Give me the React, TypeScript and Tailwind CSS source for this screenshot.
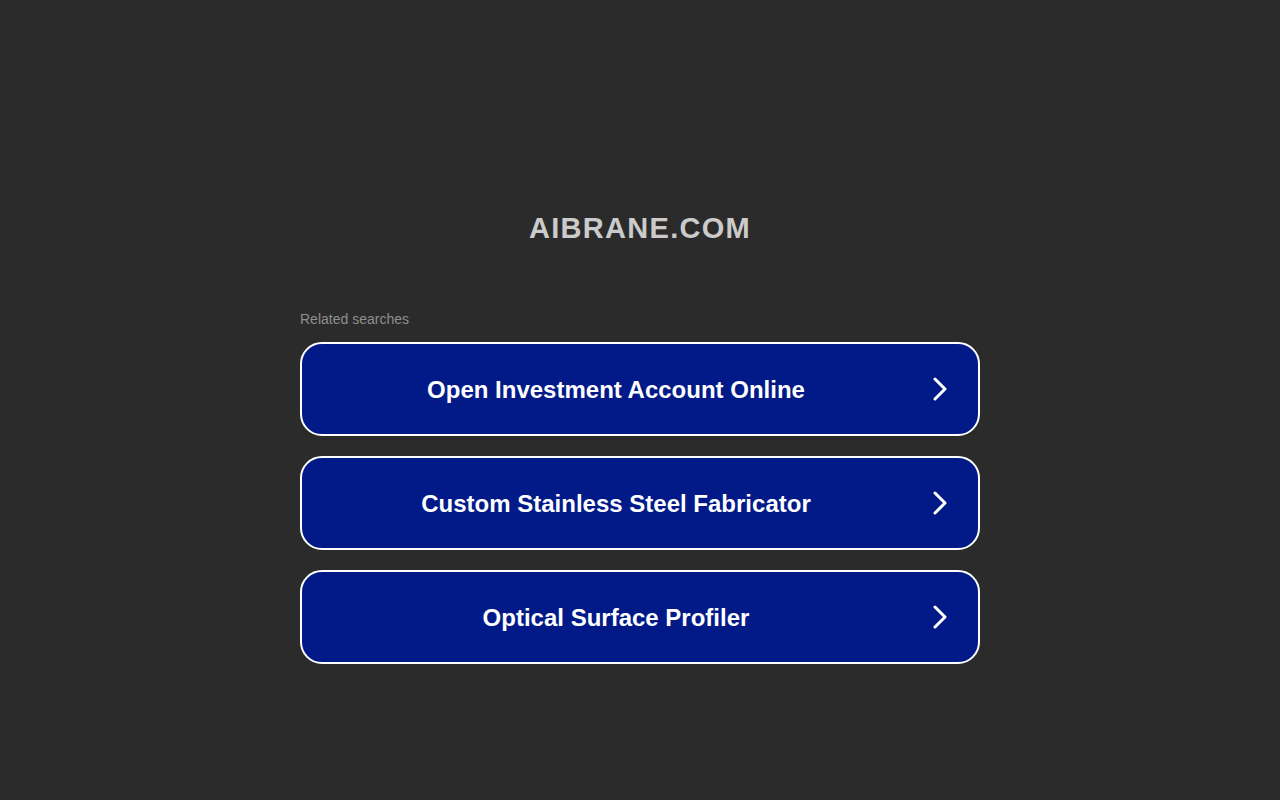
import React from "react";

const items = [
  "Open Investment Account Online",
  "Custom Stainless Steel Fabricator",
  "Optical Surface Profiler",
];

function Chevron() {
  return (
    <svg width="20" height="24" viewBox="0 0 20 24" className="shrink-0">
      <path d="M5 2 L15 12 L5 22" fill="none" stroke="white" strokeWidth="3" strokeLinecap="round" strokeLinejoin="round" />
    </svg>
  );
}

export default function App() {
  return (
    <div className="min-h-[800px] w-full bg-[#2b2b2b] flex flex-col items-center" style={{ fontFamily: '"Liberation Sans", Arial, sans-serif' }}>
      <h1 className="mt-[210px] text-[29px] leading-[36px] font-bold text-[#cbcbcb] tracking-[1.3px]">AIBRANE.COM</h1>
      <div className="mt-[65px] w-[680px] flex flex-col">
        <div className="text-[14px] leading-[16px] text-[#8e8e8e]">Related searches</div>
        <div className="mt-[15px] flex flex-col gap-[20px]">
          {items.map((t) => (
            <div key={t} className="h-[94px] rounded-[22px] border-2 border-white bg-[#011a88] flex items-center pr-[28px]">
              <div className="flex-1 text-center text-white font-bold text-[24px] leading-[28px] pt-[2px]">{t}</div>
              <Chevron />
            </div>
          ))}
        </div>
      </div>
    </div>
  );
}
